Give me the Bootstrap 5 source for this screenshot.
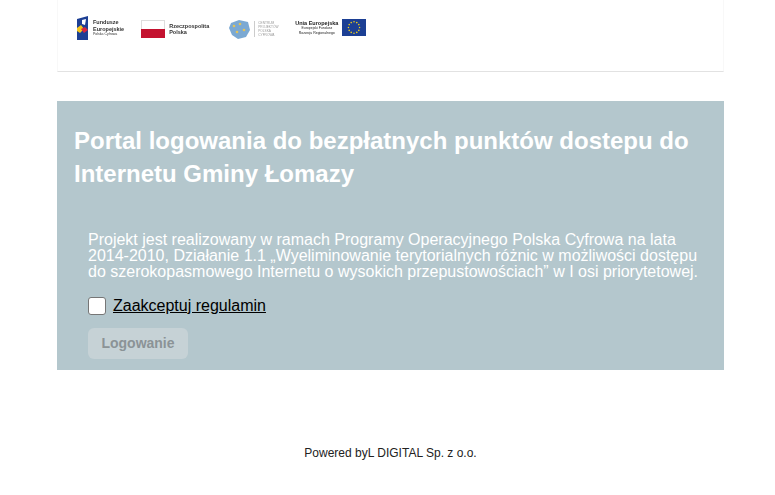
<!DOCTYPE html>
<html lang="pl">
<head>
    <meta charset="UTF-8">
    <meta name="viewport" content="width=device-width, initial-scale=1.0">
    <title>Portal logowania</title>
    <link rel="stylesheet" href="https://cdn.jsdelivr.net/npm/bootstrap@5.3.0/dist/css/bootstrap.min.css">
    <style>
        body { font-family: "Liberation Sans", Arial, sans-serif; background: #fff; }
        .page-wrap { width: 667px; margin-left: 57px; }
        .logo-bar { height: 72px; padding: 16px 0 0 18px; border: 1px solid #f8f8f8; border-top: 0; border-bottom: 1px solid #e2e2e2; gap: 17px; }
        .logo-bar > div { filter: blur(.3px); }
        .logo-txt { font-size: 5.5px; line-height: 6.5px; color: #333; font-weight: 700; }
        .logo-txt small { display: block; font-size: 3.5px; line-height: 5px; font-weight: 400; }
        .logo-cp { width: 49px; margin-left: 2px; margin-top: 3px; flex-shrink: 0; }
        .logo-grey { font-size: 3.2px; line-height: 4.2px; color: #999; white-space: nowrap; border-left: 1px solid #ccc; padding-left: 3px; }
        .logo-eu { margin-top: 3px; margin-left: 1px; }
        .logo-ue { font-size: 5.5px; line-height: 6px; color: #222; text-align: center; font-weight: 700; }
        .logo-ue small { display: block; font-size: 3.5px; line-height: 5px; font-weight: 400; }
        .login-panel { margin-top: 29px; height: 269px; background: #b4c7cd; color: #fff; padding: 23px 17px 0; }
        .login-panel h1 { font-size: 24px; line-height: 33px; font-weight: 700; margin: 0; }
        .login-text { margin: 42px 0 0 14px; font-size: 16px; line-height: 16px; width: 620px; }
        .accept-row { margin: 16px 0 0 14px; gap: 7px; height: 20px; }
        .accept-row .form-check-input { width: 18px; height: 18px; margin: 0; border: 1px solid #767676; border-radius: 3px; }
        .accept-row a { color: #000; font-size: 16px; }
        .login-btn { margin: 12px 0 0 14px; width: 100px; height: 31px; padding: 0; font-size: 14px; font-weight: 700; background: #c6d2d6; border: 0; color: #8b9396; }
        .login-btn:disabled { background: #c6d2d6; color: #8b9396; opacity: 1; }
        .foot-note { margin-top: 75px; font-size: 12px; line-height: 16px; color: #222; }
    </style>
</head>
<body>
    <div class="page-wrap">
        <div class="logo-bar d-flex align-items-start">
            <!-- Fundusze Europejskie -->
            <div class="d-flex gap-1 align-items-center">
                <svg width="13" height="24" viewBox="0 0 13 24">
                    <path d="M1 3 L12 0 V24 H1 Z" fill="#1d3f94"/>
                    <path d="M1 12 L5 9 L8 13 L4 17 L1 15 Z" fill="#f6c51b"/>
                    <path d="M5 13 L9 11 L12 14 L8 17 Z" fill="#d7263d"/>
                    <path d="M6 4 L10 3 L9 9 L6 8 Z" fill="#fff"/>
                </svg>
                <div class="logo-txt">Fundusze<br>Europejskie<small>Polska Cyfrowa</small></div>
            </div>
            <!-- Rzeczpospolita Polska -->
            <div class="d-flex gap-1 align-items-center">
                <svg width="24" height="18" viewBox="0 0 24 18" class="mt-1">
                    <rect x=".5" y=".5" width="23" height="17" fill="#fff" stroke="#ddd"/>
                    <rect x="0" y="9" width="24" height="9" fill="#c4122f"/>
                </svg>
                <div class="logo-txt mt-1">Rzeczpospolita<br>Polska</div>
            </div>
            <!-- Centrum Projektow -->
            <div class="logo-cp d-flex gap-1 align-items-center">
                <svg width="22" height="20" viewBox="0 0 22 20" class="flex-shrink-0">
                    <path d="M3 4 L11 1 L20 3 L22 11 L18 18 L10 20 L4 16 L1 9 Z" fill="#7ba9d3"/>
                    <circle cx="6" cy="7" r="1.3" fill="#e3c35a"/>
                    <circle cx="12" cy="5" r="1.3" fill="#e3c35a"/>
                    <circle cx="16" cy="11" r="1.3" fill="#e3c35a"/>
                    <circle cx="9" cy="13" r="1.3" fill="#e3c35a"/>
                </svg>
                <div class="logo-grey">CENTRUM<br>PROJEKTÓW<br>POLSKA<br>CYFROWA</div>
            </div>
            <!-- Unia Europejska -->
            <div class="logo-eu d-flex gap-1 align-items-center">
                <div class="logo-ue">Unia Europejska<small>Europejski Fundusz<br>Rozwoju Regionalnego</small></div>
                <svg width="24" height="17" viewBox="0 0 25 17" preserveAspectRatio="none">
                    <rect width="25" height="17" fill="#1c3f94"/>
                    <g fill="#f6d417">
                        <circle cx="12.5" cy="2.8" r=".8"/><circle cx="15.4" cy="3.6" r=".8"/><circle cx="17.5" cy="5.6" r=".8"/>
                        <circle cx="18.3" cy="8.5" r=".8"/><circle cx="17.5" cy="11.4" r=".8"/><circle cx="15.4" cy="13.4" r=".8"/>
                        <circle cx="12.5" cy="14.2" r=".8"/><circle cx="9.6" cy="13.4" r=".8"/><circle cx="7.5" cy="11.4" r=".8"/>
                        <circle cx="6.7" cy="8.5" r=".8"/><circle cx="7.5" cy="5.6" r=".8"/><circle cx="9.6" cy="3.6" r=".8"/>
                    </g>
                </svg>
            </div>
        </div>

        <div class="login-panel">
            <h1>Portal logowania do bezpłatnych punktów dostepu do Internetu Gminy Łomazy</h1>
            <p class="login-text">Projekt jest realizowany w ramach Programy Operacyjnego Polska Cyfrowa na lata 2014-2010, Działanie 1.1 „Wyeliminowanie terytorialnych różnic w możliwości dostępu do szerokopasmowego Internetu o wysokich przepustowościach” w I osi priorytetowej.</p>
            <div class="accept-row d-flex align-items-center">
                <input class="form-check-input" type="checkbox" id="acceptTerms">
                <a href="#">Zaakceptuj regulamin</a>
            </div>
            <button class="btn login-btn d-block" disabled>Logowanie</button>
        </div>

        <div class="foot-note text-center">Powered byL DIGITAL Sp. z o.o.</div>
    </div>
    <script src="https://cdn.jsdelivr.net/npm/bootstrap@5.3.0/dist/js/bootstrap.bundle.min.js"></script>
</body>
</html>
